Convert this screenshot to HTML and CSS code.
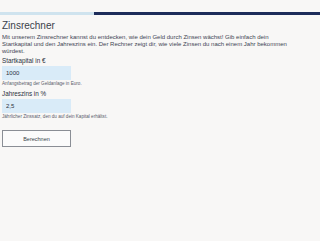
FILE: index.html
```html
<!DOCTYPE html>
<html lang="de">
<head>
    <meta charset="UTF-8">
    <meta name="viewport" content="width=device-width, initial-scale=1.0">
    <title>Zinsrechner</title>
    <link rel="stylesheet" href="styles.css">
</head>
<body>
    <div class="progress">
        <div class="progress-done"></div>
        <div class="progress-rest"></div>
    </div>

    <div class="container">
        <h1>Zinsrechner</h1>
        <p class="intro">Mit unserem Zinsrechner kannst du entdecken, wie dein Geld durch Zinsen wächst! Gib einfach dein Startkapital und den Jahreszins ein. Der Rechner zeigt dir, wie viele Zinsen du nach einem Jahr bekommen würdest.</p>

        <div class="field">
            <label for="kapital">Startkapital in €</label>
            <input type="text" id="kapital" value="1000">
            <small>Anfangsbetrag der Geldanlage in Euro.</small>
        </div>

        <div class="field">
            <label for="zins">Jahreszins in %</label>
            <input type="text" id="zins" value="2,5">
            <small>Jährlicher Zinssatz, den du auf dein Kapital erhältst.</small>
        </div>

        <button class="calc">Berechnen</button>
    </div>
</body>
</html>
```

FILE: styles.css
```css
body {
    font-family: 'Liberation Sans', Arial, sans-serif;
    margin: 0;
    padding: 0;
    background: #f8f7f6;
    color: #333a45;
}

.progress {
    display: flex;
    height: 3px;
    margin-top: 12px;
}

.progress-done {
    width: 94px;
    background: #cfe3ee;
}

.progress-rest {
    flex: 1;
    background: #1d2c5a;
}

.container {
    padding: 0 2px;
}

h1 {
    font-weight: normal;
    font-size: 10px;
    line-height: 12px;
    margin: 5px 0 2px;
    color: #3a3f4a;
}

.intro {
    font-size: 6px;
    line-height: 7px;
    margin: 0 0 2px;
    max-width: 292px;
    color: #3e4554;
}

.field {
    display: flex;
    flex-direction: column;
    align-items: flex-start;
}

label {
    font-size: 6.3px;
    line-height: 8px;
    color: #2a3140;
    margin-bottom: 1px;
}

input {
    width: 69px;
    height: 14px;
    box-sizing: border-box;
    border: none;
    background: #d9ebf8;
    font-family: inherit;
    font-size: 6px;
    padding: 0 4px;
    color: #2a3140;
}

small {
    font-size: 4.6px;
    line-height: 6px;
    color: #59606c;
    margin: 1px 0 3px;
}

.calc {
    margin-top: 7px;
    width: 69px;
    height: 17px;
    background: #fbfbfb;
    border: 1px solid #8a8e95;
    font-family: inherit;
    font-size: 5.5px;
    color: #3a3f4a;
    padding: 0;
}
```
